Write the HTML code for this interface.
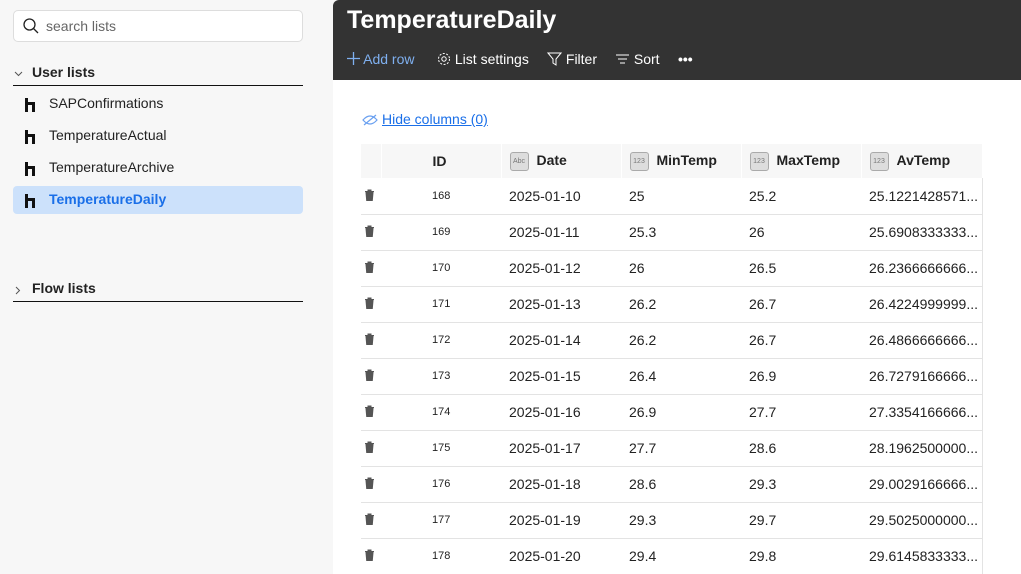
<!DOCTYPE html>
<html><head><meta charset="utf-8"><style>
*{box-sizing:border-box;margin:0;padding:0}
body{width:1021px;height:574px;overflow:hidden;background:#f7f7f7;font-family:"Segoe UI","Liberation Sans",sans-serif;position:relative;color:#222}
.search{position:absolute;left:13px;top:10px;width:290px;height:32px;border:1px solid #ddd;border-radius:5px;background:#fff}
.search span{position:absolute;left:32px;top:7px;font-size:14px;color:#666}
.sec{position:absolute;left:13px;width:290px;border-bottom:1px solid #111;height:24px;font-weight:bold;font-size:14px}
.sec b{position:absolute;left:19px;top:2px}
.item{position:absolute;left:13px;width:290px;height:28px;border-radius:4px;font-size:14px}
.item span{position:absolute;left:36px;top:5px}
.item i{position:absolute;left:12px;top:8px;width:14px;height:14px}
.sel{background:#cce1fb;color:#1a6fe8;font-weight:bold}
.main{position:absolute;left:333px;top:0;width:688px;height:574px;background:#fff;border-top-left-radius:6px;overflow:hidden}
.hdr{height:80px;background:#333;color:#fff;position:relative}
.hdr h1{position:absolute;left:14px;top:6px;font-size:25px;font-weight:600}
.tb{position:absolute;top:51px;font-size:14px;color:#fff}
.hide{position:absolute;left:49px;top:111px;font-size:14px;color:#1a6fe8;text-decoration:underline}
table{position:absolute;left:28px;top:144px;border-collapse:collapse;font-size:14px;table-layout:fixed;width:621px}
td,th{height:36px;border-bottom:1px solid #e3e3e3;text-align:left;padding:0 8px;white-space:nowrap;overflow:hidden}
th{background:#f7f7f7;border-bottom:none;border-right:1px solid #fff;height:34px;font-weight:bold}
td.t{padding:0 0 0 3px}
td.id{font-size:11px;padding-left:51px}
tr td:last-child{border-right:1px solid #e3e3e3}
.ic{display:inline-block;width:19px;height:19px;border:1px solid #aaa;border-radius:3px;background:#ddd;font-size:7px;color:#777;text-align:center;line-height:17px;vertical-align:middle;margin-right:8px;font-weight:normal}
</style></head><body>
<div class="search"><svg style="position:absolute;left:9px;top:7px" width="16" height="16"><circle cx="6.5" cy="6.5" r="5.5" fill="none" stroke="#222" stroke-width="1.3"/><path d="M10.5 10.5L15 15" stroke="#222" stroke-width="1.3"/></svg><span>search lists</span></div>
<div class="sec" style="top:62px"><svg style="position:absolute;left:1px;top:9px" width="9" height="6"><path d="M1 1l3.5 3.5L8 1" fill="none" stroke="#555"/></svg><b>User lists</b></div>
<div class="item" style="top:90px"><i><svg width="14" height="14"><path d="M1.5 0v14M1.5 5.5h7v8.5" fill="none" stroke="#111" stroke-width="3"/></svg></i><span>SAPConfirmations</span></div>
<div class="item" style="top:122px"><i><svg width="14" height="14"><path d="M1.5 0v14M1.5 5.5h7v8.5" fill="none" stroke="#111" stroke-width="3"/></svg></i><span>TemperatureActual</span></div>
<div class="item" style="top:154px"><i><svg width="14" height="14"><path d="M1.5 0v14M1.5 5.5h7v8.5" fill="none" stroke="#111" stroke-width="3"/></svg></i><span>TemperatureArchive</span></div>
<div class="item sel" style="top:186px"><i><svg width="14" height="14"><path d="M1.5 0v14M1.5 5.5h7v8.5" fill="none" stroke="#111" stroke-width="3"/></svg></i><span>TemperatureDaily</span></div>
<div class="sec" style="top:278px"><svg style="position:absolute;left:2px;top:8px" width="6" height="9"><path d="M1 1l3.5 3.5L1 8" fill="none" stroke="#555"/></svg><b>Flow lists</b></div>
<div class="main">
<div class="hdr"><h1>TemperatureDaily</h1>
<div class="tb" style="left:14px;color:#7fb0f0"><svg width="13" height="13" style="vertical-align:-1px"><path d="M6.5 0v13M0 6.5h13" stroke="#7fb0f0" stroke-width="1.3"/></svg> Add row</div>
<div class="tb" style="left:104px"><svg width="14" height="14" style="vertical-align:-2px"><circle cx="7" cy="7" r="5.5" fill="none" stroke="#fff" stroke-dasharray="2 1.5"/><circle cx="7" cy="7" r="2.2" fill="none" stroke="#fff"/></svg> List settings</div>
<div class="tb" style="left:214px"><svg width="15" height="14" style="vertical-align:-2px"><path d="M1 1h13L9 7v6l-3-2V7z" fill="none" stroke="#fff"/></svg> Filter</div>
<div class="tb" style="left:282px"><svg width="15" height="12" style="vertical-align:-1px"><path d="M1 2h13M3 6h9M5 10h5" stroke="#fff"/></svg> Sort</div>
<div class="tb" style="left:345px;font-weight:bold">•••</div>
</div>
<div class="hide"><svg width="16" height="12" style="position:absolute;left:-20px;top:3px"><path d="M1 6Q8 -2 15 6Q8 14 1 6z M2 11L14 1" fill="none" stroke="#6aa0f0" stroke-width="1.2"/></svg>Hide columns (0)</div>
<table>
<colgroup><col style="width:20px"><col style="width:120px"><col style="width:120px"><col style="width:120px"><col style="width:120px"><col style="width:121px"></colgroup>
<tr><th></th><th style="padding-left:51px">ID</th><th><span class="ic">Abc</span>Date</th><th><span class="ic">123</span>MinTemp</th><th><span class="ic">123</span>MaxTemp</th><th><span class="ic">123</span>AvTemp</th></tr>
<tr><td class="t"><svg width="11" height="12"><path d="M1 2.5h9M4 2.5V1h3v1.5M2 3.5l.7 8h5.6l.7-8z" fill="#555" stroke="#555" stroke-width="1"/></svg></td><td class="id">168</td><td>2025-01-10</td><td>25</td><td>25.2</td><td>25.1221428571...</td></tr>
<tr><td class="t"><svg width="11" height="12"><path d="M1 2.5h9M4 2.5V1h3v1.5M2 3.5l.7 8h5.6l.7-8z" fill="#555" stroke="#555" stroke-width="1"/></svg></td><td class="id">169</td><td>2025-01-11</td><td>25.3</td><td>26</td><td>25.6908333333...</td></tr>
<tr><td class="t"><svg width="11" height="12"><path d="M1 2.5h9M4 2.5V1h3v1.5M2 3.5l.7 8h5.6l.7-8z" fill="#555" stroke="#555" stroke-width="1"/></svg></td><td class="id">170</td><td>2025-01-12</td><td>26</td><td>26.5</td><td>26.2366666666...</td></tr>
<tr><td class="t"><svg width="11" height="12"><path d="M1 2.5h9M4 2.5V1h3v1.5M2 3.5l.7 8h5.6l.7-8z" fill="#555" stroke="#555" stroke-width="1"/></svg></td><td class="id">171</td><td>2025-01-13</td><td>26.2</td><td>26.7</td><td>26.4224999999...</td></tr>
<tr><td class="t"><svg width="11" height="12"><path d="M1 2.5h9M4 2.5V1h3v1.5M2 3.5l.7 8h5.6l.7-8z" fill="#555" stroke="#555" stroke-width="1"/></svg></td><td class="id">172</td><td>2025-01-14</td><td>26.2</td><td>26.7</td><td>26.4866666666...</td></tr>
<tr><td class="t"><svg width="11" height="12"><path d="M1 2.5h9M4 2.5V1h3v1.5M2 3.5l.7 8h5.6l.7-8z" fill="#555" stroke="#555" stroke-width="1"/></svg></td><td class="id">173</td><td>2025-01-15</td><td>26.4</td><td>26.9</td><td>26.7279166666...</td></tr>
<tr><td class="t"><svg width="11" height="12"><path d="M1 2.5h9M4 2.5V1h3v1.5M2 3.5l.7 8h5.6l.7-8z" fill="#555" stroke="#555" stroke-width="1"/></svg></td><td class="id">174</td><td>2025-01-16</td><td>26.9</td><td>27.7</td><td>27.3354166666...</td></tr>
<tr><td class="t"><svg width="11" height="12"><path d="M1 2.5h9M4 2.5V1h3v1.5M2 3.5l.7 8h5.6l.7-8z" fill="#555" stroke="#555" stroke-width="1"/></svg></td><td class="id">175</td><td>2025-01-17</td><td>27.7</td><td>28.6</td><td>28.1962500000...</td></tr>
<tr><td class="t"><svg width="11" height="12"><path d="M1 2.5h9M4 2.5V1h3v1.5M2 3.5l.7 8h5.6l.7-8z" fill="#555" stroke="#555" stroke-width="1"/></svg></td><td class="id">176</td><td>2025-01-18</td><td>28.6</td><td>29.3</td><td>29.0029166666...</td></tr>
<tr><td class="t"><svg width="11" height="12"><path d="M1 2.5h9M4 2.5V1h3v1.5M2 3.5l.7 8h5.6l.7-8z" fill="#555" stroke="#555" stroke-width="1"/></svg></td><td class="id">177</td><td>2025-01-19</td><td>29.3</td><td>29.7</td><td>29.5025000000...</td></tr>
<tr><td class="t"><svg width="11" height="12"><path d="M1 2.5h9M4 2.5V1h3v1.5M2 3.5l.7 8h5.6l.7-8z" fill="#555" stroke="#555" stroke-width="1"/></svg></td><td class="id">178</td><td>2025-01-20</td><td>29.4</td><td>29.8</td><td>29.6145833333...</td></tr>
</table>
</div>
</body></html>
